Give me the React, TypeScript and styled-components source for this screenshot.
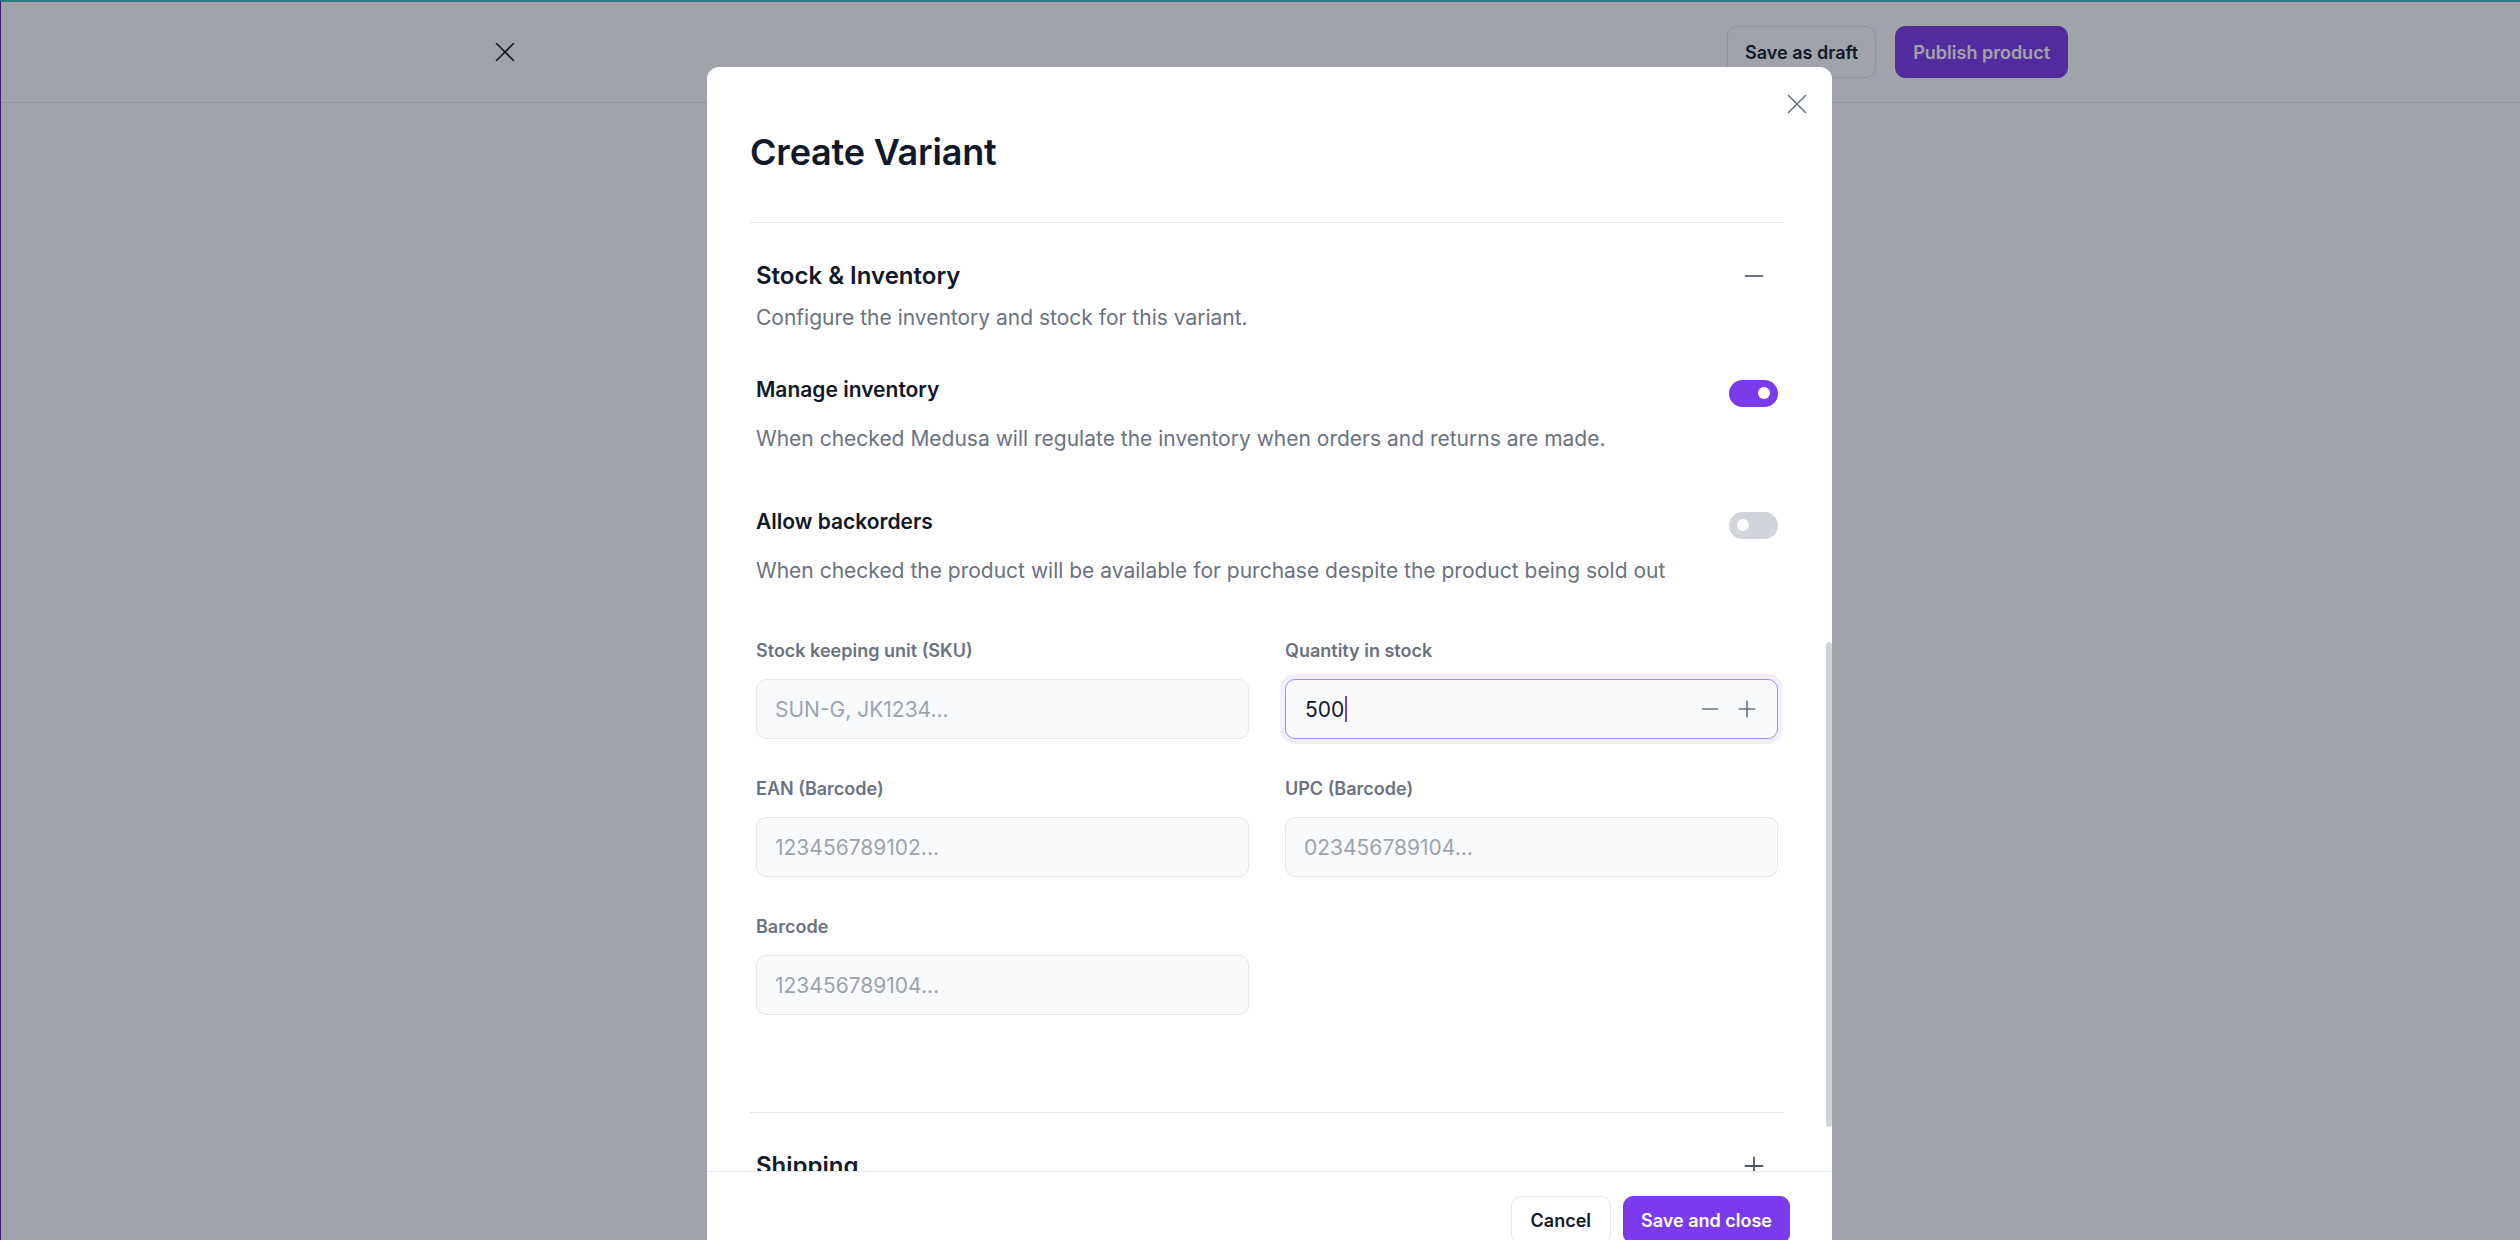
import styled, { createGlobalStyle } from 'styled-components';

const GlobalStyle = createGlobalStyle`
  * { box-sizing: border-box; }
  html, body { margin: 0; padding: 0; height: 100%; overflow: hidden; }
  body {
    font-family: Inter, "Noto Sans", sans-serif;
    color: #111827;
    background: #fff;
    -webkit-font-smoothing: antialiased;
  }
`;

const CloseIcon = ({ size = 20, color = '#6b7280' }: { size?: number; color?: string }) => (
  <svg width={size} height={size} viewBox='0 0 20 20' fill='none'>
    <path d='M1.5 1.5L18.5 18.5M18.5 1.5L1.5 18.5' stroke={color} strokeWidth='1.6' strokeLinecap='round' />
  </svg>
);

const MinusIcon = ({ size = 20, color = '#6b7280' }: { size?: number; color?: string }) => (
  <svg width={size} height={size} viewBox='0 0 20 20' fill='none'>
    <path d='M1.5 10H18.5' stroke={color} strokeWidth='1.8' strokeLinecap='round' />
  </svg>
);

const PlusIcon = ({ size = 20, color = '#6b7280' }: { size?: number; color?: string }) => (
  <svg width={size} height={size} viewBox='0 0 20 20' fill='none'>
    <path d='M1.5 10H18.5M10 1.5V18.5' stroke={color} strokeWidth='1.8' strokeLinecap='round' />
  </svg>
);

const fields = [
  { label: 'Stock keeping unit (SKU)', placeholder: 'SUN-G, JK1234...' },
  { label: 'Quantity in stock', value: '500' },
  { label: 'EAN (Barcode)', placeholder: '123456789102...' },
  { label: 'UPC (Barcode)', placeholder: '023456789104...' },
  { label: 'Barcode', placeholder: '123456789104...' },
];

function App() {
  return (
    <Frame>
      <GlobalStyle />
      <TopBar>
        <IconButton>
          <CloseIcon size={20} color='#111827' />
        </IconButton>
        <TopActions>
          <TopButton>Save as draft</TopButton>
          <TopButton primary>Publish product</TopButton>
        </TopActions>
      </TopBar>

      <Overlay />

      <Modal>
        <ModalHeader>
          <Title>Create Variant</Title>
          <ModalClose>
            <CloseIcon size={20} />
          </ModalClose>
        </ModalHeader>

        <ModalBody>
          <Section bottom={97}>
            <SectionHead>
              <SectionTitle>Stock &amp; Inventory</SectionTitle>
              <HeadIcon>
                <MinusIcon size={20} />
              </HeadIcon>
            </SectionHead>
            <SectionDesc>Configure the inventory and stock for this variant.</SectionDesc>

            <ToggleList>
              <div>
                <ToggleRow>
                  <ToggleLabel>Manage inventory</ToggleLabel>
                  <Switch on />
                </ToggleRow>
                <ToggleDesc>
                  When checked Medusa will regulate the inventory when orders and returns are made.
                </ToggleDesc>
              </div>
              <div>
                <ToggleRow>
                  <ToggleLabel>Allow backorders</ToggleLabel>
                  <Switch />
                </ToggleRow>
                <ToggleDesc>
                  When checked the product will be available for purchase despite the product being
                  sold out
                </ToggleDesc>
              </div>
            </ToggleList>

            <FieldGrid>
              {fields.map((f) => (
                <Field key={f.label}>
                  <FieldLabel>{f.label}</FieldLabel>
                  {f.value ? (
                    <QtyBox>
                      <QtyValue>{f.value}</QtyValue>
                      <Caret />
                      <Stepper>
                        <MinusIcon size={18} />
                        <PlusIcon size={18} />
                      </Stepper>
                    </QtyBox>
                  ) : (
                    <Input readOnly placeholder={f.placeholder} />
                  )}
                </Field>
              ))}
            </FieldGrid>
          </Section>

          <Section bottom={35}>
            <SectionHead>
              <SectionTitle>Shipping</SectionTitle>
              <HeadIcon>
                <PlusIcon size={20} color='#4b5563' />
              </HeadIcon>
            </SectionHead>
          </Section>

          <ScrollThumb />
        </ModalBody>

        <ModalFooter>
          <FooterButton>Cancel</FooterButton>
          <FooterButton primary>Save and close</FooterButton>
        </ModalFooter>
      </Modal>
    </Frame>
  );
}

export default App;

const Frame = styled.div`
  position: relative;
  height: 1240px;
  overflow: hidden;
  border-top: 2px solid #2e7b80;
  border-left: 1px solid #3b1f6e;
  background: #ffffff;
`;

const TopBar = styled.header`
  height: 101px;
  border-bottom: 1px solid #e5e7eb;
  display: flex;
  align-items: center;
  justify-content: space-between;
  padding: 0 452px 0 494px;
`;

const IconButton = styled.div`
  width: 20px;
  height: 20px;
  display: flex;
`;

const TopActions = styled.div`
  display: flex;
  gap: 19px;
`;

const TopButton = styled.button<{ primary?: boolean }>`
  height: 52px;
  padding: 0 17px;
  border-radius: 10px;
  font-family: Inter, sans-serif;
  font-size: 18px;
  font-weight: 600;
  border: 1px solid ${(p) => (p.primary ? '#7c3aed' : '#e5e7eb')};
  background: ${(p) => (p.primary ? '#7c3aed' : '#ffffff')};
  color: ${(p) => (p.primary ? '#ffffff' : '#111827')};
`;

const Overlay = styled.div`
  position: absolute;
  inset: 0;
  background: rgba(17, 24, 39, 0.4);
`;

const Modal = styled.div`
  position: absolute;
  left: 706px;
  top: 65px;
  width: 1125px;
  height: 1201px;
  background: #ffffff;
  border-radius: 12px;
  display: flex;
  flex-direction: column;
  overflow: hidden;
`;

const ModalHeader = styled.div`
  position: relative;
  padding: 61px 48px 46px 43px;
`;

const Title = styled.h1`
  margin: 0;
  font-size: 36px;
  line-height: 48px;
  font-weight: 600;
  color: #111827;
  letter-spacing: -0.2px;
`;

const ModalClose = styled.div`
  position: absolute;
  top: 27px;
  right: 25px;
  width: 20px;
  height: 20px;
  display: flex;
`;

const ModalBody = styled.div`
  position: relative;
  flex: 1;
  overflow: hidden;
  padding: 0 48px 0 43px;
`;

const Section = styled.section<{ bottom: number }>`
  border-top: 1px solid #e5e7eb;
  padding: 35px 6px ${(p) => p.bottom}px 6px;
`;

const SectionHead = styled.div`
  display: flex;
  align-items: center;
  justify-content: space-between;
  height: 36px;
`;

const SectionTitle = styled.span`
  font-size: 24px;
  line-height: 36px;
  font-weight: 600;
  color: #111827;
`;

const HeadIcon = styled.div`
  display: flex;
  margin-right: 14px;
`;

const SectionDesc = styled.p`
  margin: 8px 0 0;
  font-size: 21px;
  line-height: 32px;
  color: #6b7280;
`;

const ToggleList = styled.div`
  margin-top: 40px;
  display: flex;
  flex-direction: column;
  gap: 51px;
`;

const ToggleRow = styled.div`
  display: flex;
  align-items: center;
  justify-content: space-between;
  height: 32px;
`;

const ToggleLabel = styled.span`
  font-size: 21px;
  line-height: 32px;
  font-weight: 600;
  color: #111827;
`;

const Switch = styled.div<{ on?: boolean }>`
  position: relative;
  width: 49px;
  height: 27px;
  margin-top: 6px;
  border-radius: 14px;
  background: ${(p) => (p.on ? '#7c3aed' : '#d1d5db')};

  &::after {
    content: '';
    position: absolute;
    top: 7.5px;
    left: ${(p) => (p.on ? '29px' : '8px')};
    width: 12px;
    height: 12px;
    border-radius: 50%;
    background: #ffffff;
  }
`;

const ToggleDesc = styled.p`
  margin: 17px 0 0;
  font-size: 21px;
  line-height: 32px;
  color: #6b7280;
`;

const FieldGrid = styled.div`
  margin-top: 52px;
  display: grid;
  grid-template-columns: 1fr 1fr;
  column-gap: 36px;
  row-gap: 38px;
`;

const Field = styled.div`
  display: flex;
  flex-direction: column;
`;

const FieldLabel = styled.label`
  font-size: 18px;
  line-height: 24px;
  font-weight: 600;
  color: #6b7280;
  margin-bottom: 16px;
`;

const Input = styled.input`
  height: 60px;
  width: 100%;
  padding: 0 18px;
  background: #f9fafb;
  border: 1px solid #e5e7eb;
  border-radius: 10px;
  font-family: Inter, sans-serif;
  font-size: 21px;
  color: #111827;
  outline: none;

  &::placeholder {
    color: #9ca3af;
  }
`;

const QtyBox = styled.div`
  height: 60px;
  display: flex;
  align-items: center;
  padding: 0 21px 0 19px;
  background: #f9fafb;
  border: 1px solid #a78bfa;
  border-radius: 10px;
  box-shadow: 0 0 0 5px #f3eefe;
`;

const QtyValue = styled.span`
  font-size: 21px;
  color: #111827;
`;

const Caret = styled.span`
  width: 2px;
  height: 26px;
  margin-left: 1px;
  background: #7c3aed;
`;

const Stepper = styled.div`
  margin-left: auto;
  display: flex;
  gap: 19px;
`;

const ScrollThumb = styled.div`
  position: absolute;
  top: 420px;
  right: 0;
  width: 6px;
  height: 485px;
  border-radius: 3px;
  background: #d1d5db;
`;

const ModalFooter = styled.footer`
  border-top: 1px solid #e5e7eb;
  padding: 24px 42px 24px;
  display: flex;
  justify-content: flex-end;
  gap: 12px;
  background: #ffffff;
`;

const FooterButton = styled.button<{ primary?: boolean }>`
  height: 48px;
  padding: 0 ${(p) => (p.primary ? '17px' : '19px')};
  border-radius: 10px;
  font-family: Inter, sans-serif;
  font-size: 18px;
  font-weight: 600;
  border: 1px solid ${(p) => (p.primary ? '#7c3aed' : '#e5e7eb')};
  background: ${(p) => (p.primary ? '#7c3aed' : '#ffffff')};
  color: ${(p) => (p.primary ? '#ffffff' : '#111827')};
`;
